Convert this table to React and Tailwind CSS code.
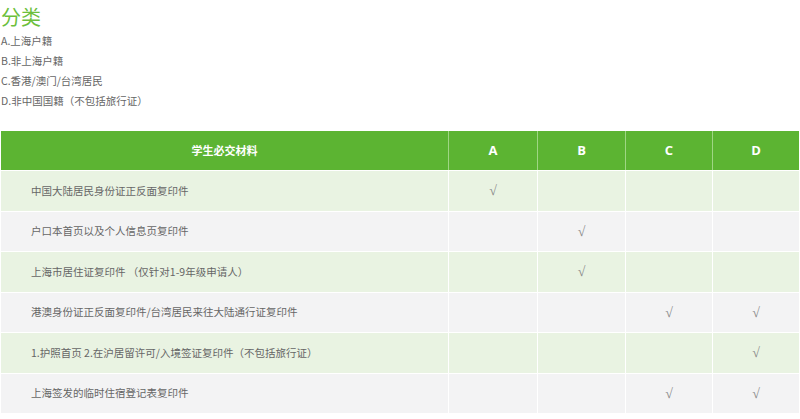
import React from "react";

const rows = [
  { t: "中国大陆居民身份证正反面复印件", c: [1, 0, 0, 0], bg: "bg-[#e9f3e2]" },
  { t: "户口本首页以及个人信息页复印件", c: [0, 1, 0, 0], bg: "bg-[#f3f3f4]" },
  { t: "上海市居住证复印件 （仅针对1-9年级申请人）", c: [0, 1, 0, 0], bg: "bg-[#e9f3e2]" },
  { t: "港澳身份证正反面复印件/台湾居民来往大陆通行证复印件", c: [0, 0, 1, 1], bg: "bg-[#f3f3f4]" },
  { t: "1.护照首页 2.在沪居留许可/入境签证复印件（不包括旅行证）", c: [0, 0, 0, 1], bg: "bg-[#e9f3e2]" },
  { t: "上海签发的临时住宿登记表复印件", c: [0, 0, 1, 1], bg: "bg-[#f3f3f4]" },
];

const font = { fontFamily: '"Noto Sans CJK SC", "Noto Sans", sans-serif' };

export default function App() {
  return (
    <div className="w-[800px] h-[419px] bg-white overflow-hidden text-[#666]" style={font}>
      <div className="pl-[1px] pt-[3px]">
        <div className="text-[20px] leading-[28px] text-[#6cbf3c]">分类</div>
        <div className="text-[10.5px] leading-[20px] text-[#666]">
          <div>A.上海户籍</div>
          <div>B.非上海户籍</div>
          <div>C.香港/澳门/台湾居民</div>
          <div>D.非中国国籍（不包括旅行证）</div>
        </div>
      </div>
      <div className="mt-[20px] ml-[1px] w-[798px]">
        <div className="grid grid-cols-[447px_89px_88px_87px_87px] h-[39px] bg-[#5cb432] text-white font-bold text-[11px]">
          <div className="flex items-center justify-center">学生必交材料</div>
          {["A", "B", "C", "D"].map((l) => (
            <div key={l} className="flex items-center justify-center border-l border-[#9fd684] text-[13px]" style={{ fontFamily: '"Open Sans", "Noto Sans", sans-serif' }}>
              {l}
            </div>
          ))}
        </div>
        {rows.map((r, i) => (
          <div
            key={i}
            className={`grid grid-cols-[447px_89px_88px_87px_87px] h-[40.5px] border-t border-white ${r.bg} text-[10.5px]`}
          >
            <div className="flex items-center pl-[30px] text-[#666]">{r.t}</div>
            {r.c.map((v, j) => (
              <div key={j} className="flex items-center justify-center border-l border-white text-[#8a8a8a] text-[14px]" style={{ fontFamily: '"Liberation Serif", serif' }}>
                {v ? "√" : ""}
              </div>
            ))}
          </div>
        ))}
      </div>
    </div>
  );
}
